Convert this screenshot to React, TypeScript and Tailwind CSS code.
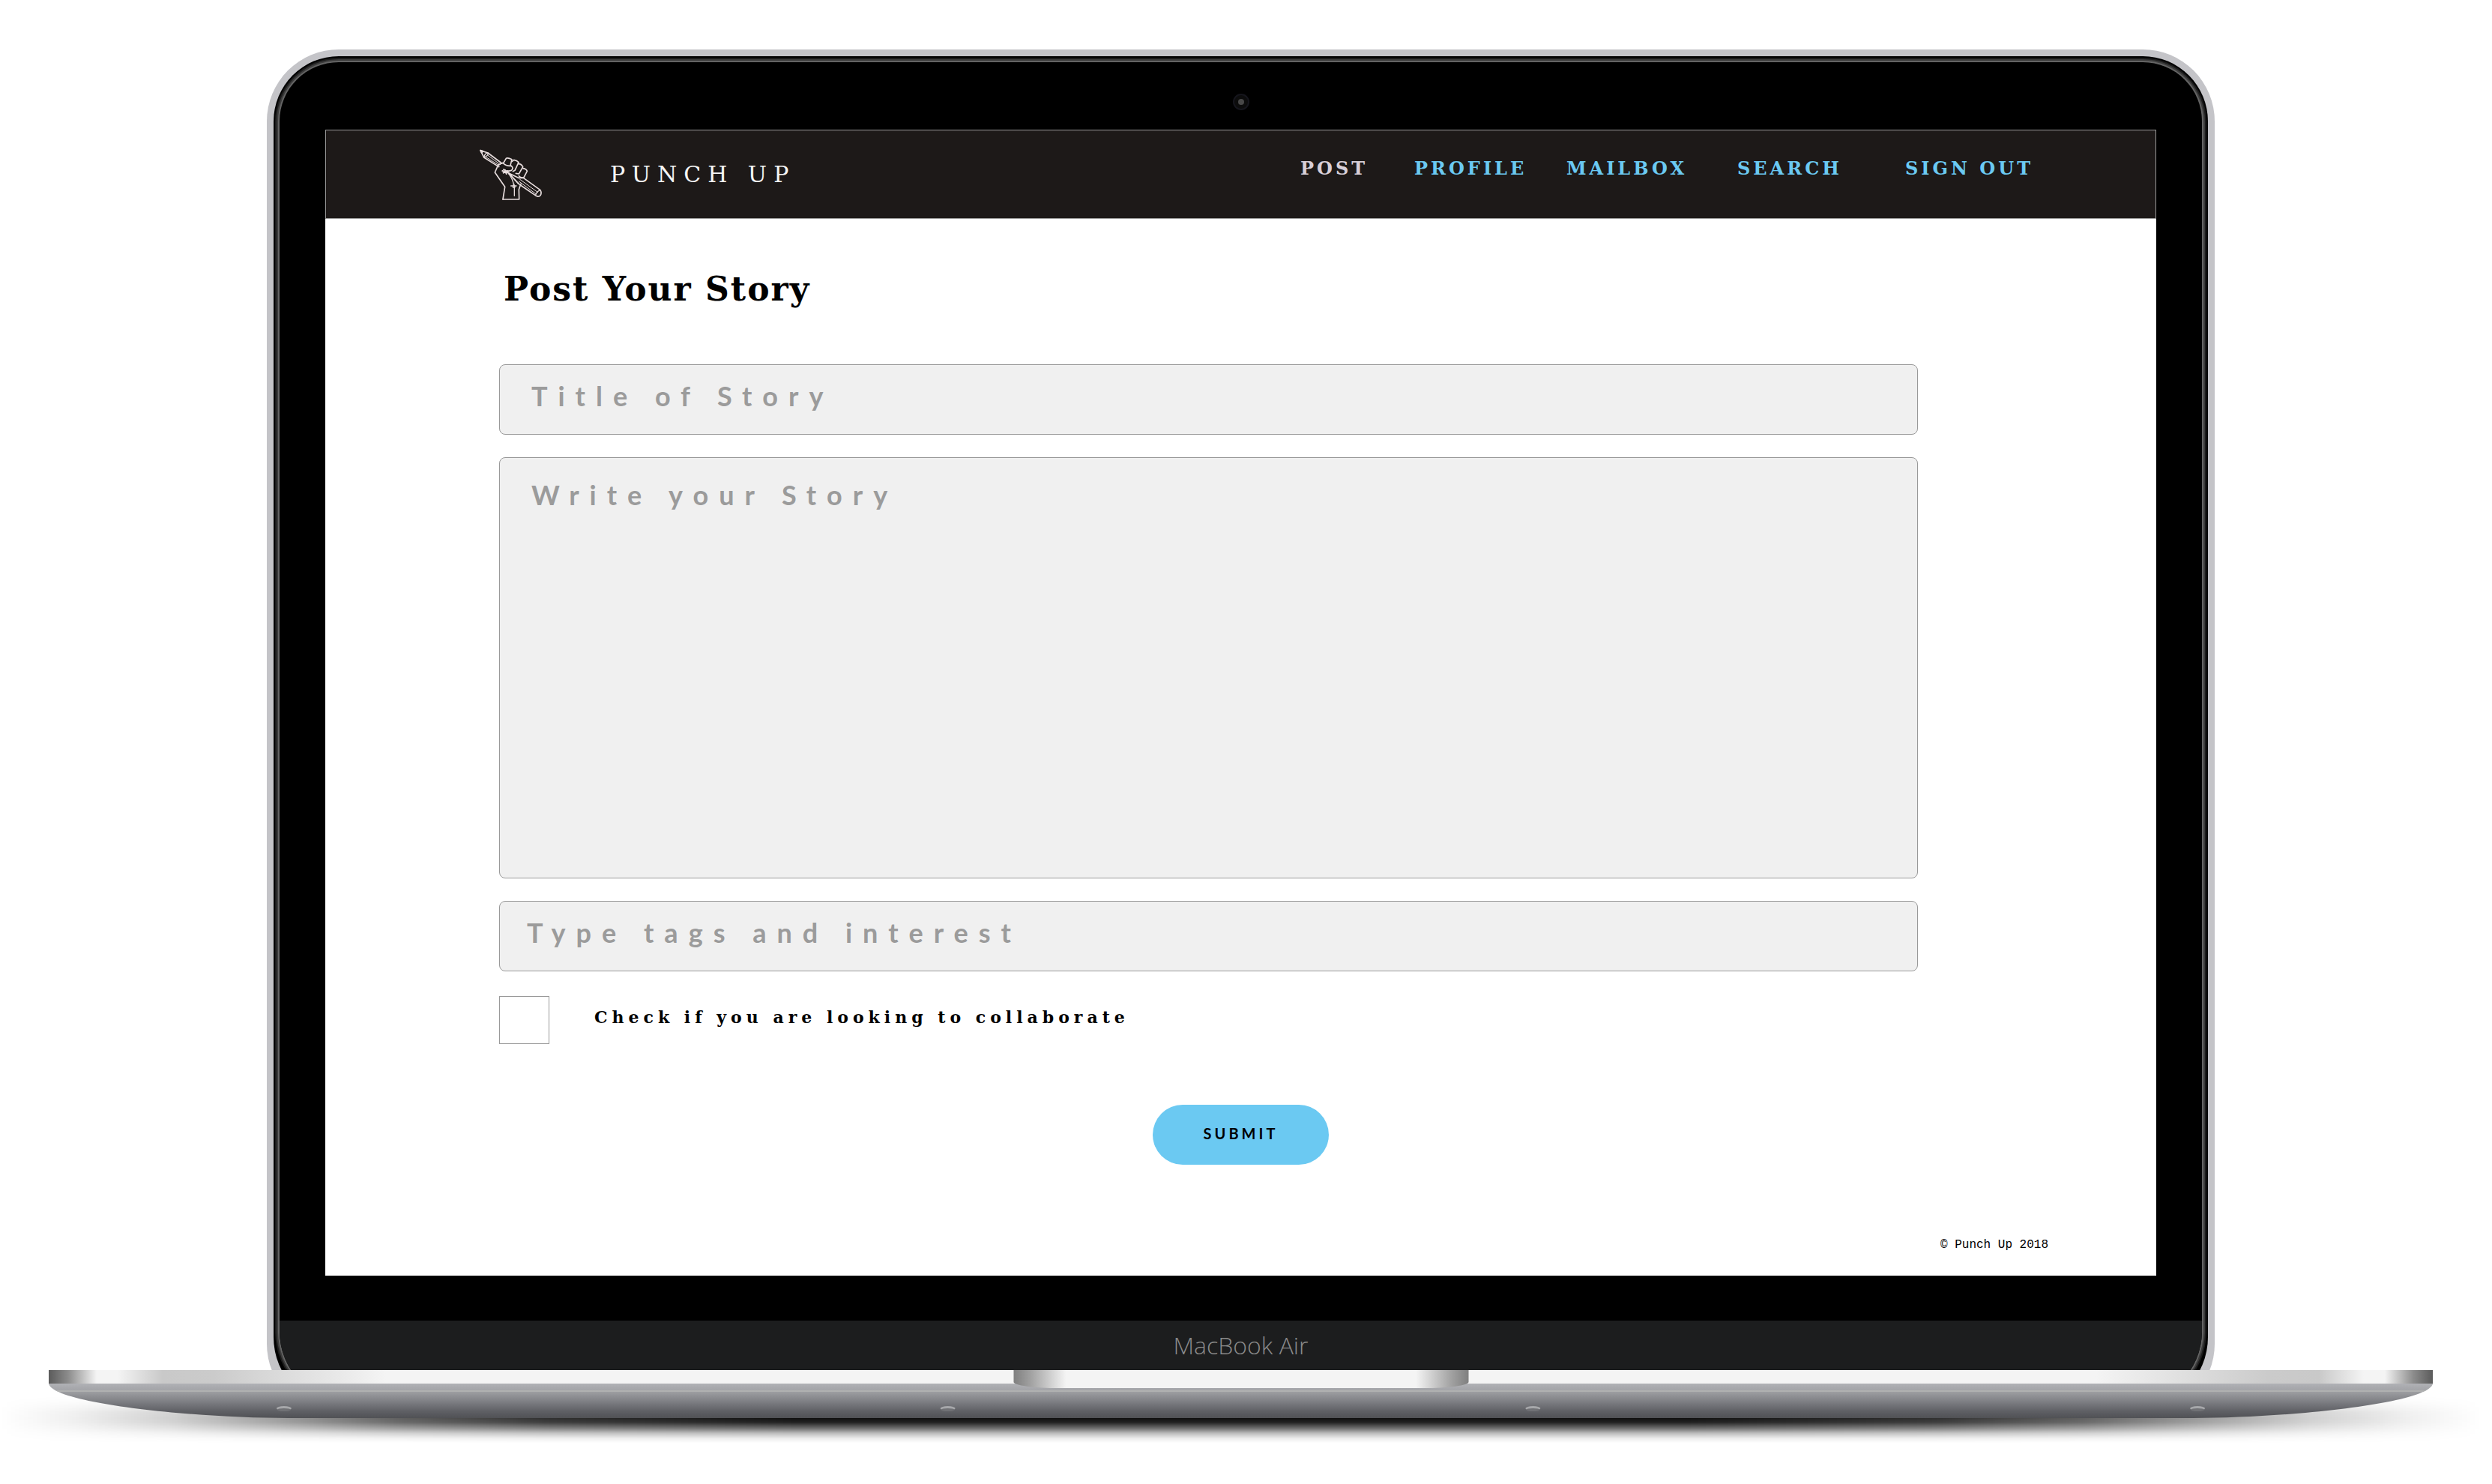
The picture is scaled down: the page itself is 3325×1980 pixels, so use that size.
const SLAB = "font-['DejaVu_Serif',serif]";

const NAV = [
  { label: "POST", current: true },
  { label: "PROFILE", current: false },
  { label: "MAILBOX", current: false },
  { label: "SEARCH", current: false },
  { label: "SIGN OUT", current: false },
];

function FistLogo() {
  return (
    <svg
      viewBox="54 42 258 210"
      className="h-[70px] w-[86px] shrink-0"
      fill="none"
      stroke="#e6dcdc"
      strokeWidth="5"
      strokeLinecap="round"
      strokeLinejoin="round"
      aria-hidden="true"
    >
      {/* pencil, upper part */}
      <path d="M60 50 L90 60 L146 102 M60 50 L74 78 L134 116" />
      <path d="M60 50 L70 53 L65 60 Z" fill="#e6dcdc" />
      <path d="M90 60 Q78 60 74 78 M90 60 Q94 70 74 78" strokeWidth="4" />
      <path d="M90 70 L140 107 M83 77 L136 111" strokeWidth="3" />
      {/* hand */}
      <path d="M150 246 L158 196 L118 138 L132 107 L150 100 Q164 114 184 112 Q194 122 184 130 L168 134 L152 126" />
      <path d="M150 246 L215 246 L214 206 L222 184" />
      {/* fingers */}
      <path d="M153 99 L163 82 Q170 78 186 86 L180 110" />
      <path d="M187 94 L194 88 Q206 90 213 98 L198 130 L190 134" />
      <path d="M213 104 Q224 104 230 116 L214 144 L202 142" />
      <path d="M231 122 Q244 124 247 133 L234 158 Q222 162 214 152" />
      {/* pencil, lower part */}
      <path d="M172 140 L212 160 L232 160 L299 208 Q308 222 298 232 Q290 238 280 230 L216 186 L172 140" />
      <path d="M218 166 L290 218 M214 174 L282 224" strokeWidth="3" />
      <path d="M299 208 Q286 214 280 230" strokeWidth="4" />
      {/* palm creases */}
      <path d="M148 132 L174 140 M152 140 L170 132 M158 128 L164 144" strokeWidth="6" />
      <path d="M172 142 Q190 164 194 190 M182 150 L212 184" strokeWidth="4" />
      <path d="M182 192 L204 192 M194 184 L190 198 L198 198 Z M196 200 L196 232" strokeWidth="4" />
    </svg>
  );
}

function Header() {
  return (
    <header className="flex h-[119px] items-center justify-between border border-[#999] bg-[#1d1918] pr-[163px] pl-[204px]">
      <div className="flex items-center gap-[89px]">
        <FistLogo />
        <span className={`${SLAB} text-[30px] leading-10 tracking-[9px] whitespace-nowrap text-[#f5f5f5]`}>
          PUNCH UP
        </span>
      </div>
      <nav className={`${SLAB} grid grid-cols-[152px_203px_228px_224px_auto] pb-4 text-2xl font-bold tracking-[4px] whitespace-nowrap`}>
        {NAV.map((n) => (
          <a
            key={n.label}
            href="#"
            aria-current={n.current ? "page" : undefined}
            className={n.current ? "text-[#d7cfd8]" : "text-[#6bc9f2]"}
          >
            {n.label}
          </a>
        ))}
      </nav>
    </header>
  );
}

const FIELD =
  "block w-full resize-none rounded-lg border border-[#999] bg-[#f0f0f0] pr-9 font-['Lato',sans-serif] text-4xl leading-[44px] font-bold tracking-[14px] text-[#333] outline-none placeholder:text-[#9b9b9b] placeholder:opacity-100";

function StoryForm() {
  return (
    <form className="flex flex-col" onSubmit={(e) => e.preventDefault()}>
      <div className="flex flex-col pt-[66px] pr-[318px] pl-[232px]">
        <h1 className={`${SLAB} mb-[72px] pl-1.5 text-[44px] leading-[56px] font-bold tracking-[2px] text-black`}>
          Post Your Story
        </h1>
        <div className="flex flex-col gap-[30px]">
          <input type="text" aria-label="Title of Story" placeholder="Title of Story" className={`${FIELD} h-[94px] pb-2.5 pl-[42px]`} />
          <textarea aria-label="Write your Story" placeholder="Write your Story" className={`${FIELD} h-[562px] pt-[27px] pl-[42px]`} />
          <input type="text" aria-label="Type tags and interest" placeholder="Type tags and interest" className={`${FIELD} h-[94px] pb-2.5 pl-9`} />
        </div>
        <div className="mt-[33px] flex items-center gap-[60px]">
          <input
            id="collaborate"
            type="checkbox"
            className="h-16 w-[67px] shrink-0 appearance-none border border-[#999] bg-white checked:bg-[#6bc9f2]"
          />
          <label htmlFor="collaborate" className={`${SLAB} pb-2 text-[22px] leading-8 font-bold tracking-[6px] text-black`}>
            Check if you are looking to collaborate
          </label>
        </div>
      </div>
      <button
        type="submit"
        className="mt-[81px] h-20 w-[235px] self-center rounded-full bg-[#6bc9f2] pb-1 font-['Lato',sans-serif] text-xl font-bold tracking-[4px] text-black"
      >
        SUBMIT
      </button>
    </form>
  );
}

function Lid() {
  return (
    <div className="mx-[356px] rounded-t-[96px] rounded-b-[96px] bg-[#c4c4c8] p-[9px]">
      <div className="rounded-t-[87px] rounded-b-[96px] bg-black p-2">
        <div className="overflow-hidden rounded-t-[79px] rounded-b-[96px] bg-black shadow-[0_0_0_2px_#646464,0_0_0_4px_#3c3c3c,0_0_0_6px_#1c1c1c]">
          <div className="flex h-[90px] items-center justify-center pt-4">
            <span className="grid size-[22px] place-items-center rounded-full border-2 border-[#15151c] bg-[#0c0c0c]">
              <span className="size-2 rounded-full bg-[#484848]" />
            </span>
          </div>
          <div className="mx-[61px] bg-white">
            <Header />
            <StoryForm />
            <footer className="mt-[95px] pr-36 pb-[29px] text-right font-['Liberation_Mono',monospace] text-base leading-6 text-black">
              © Punch Up 2018
            </footer>
          </div>
          <div className="mt-[60px] h-[110px] bg-[#1c1d1e] text-center font-['Open_Sans',sans-serif] text-[32px] leading-[66px] font-light text-[#8a8a8a]">
            MacBook Air
          </div>
        </div>
      </div>
    </div>
  );
}

function Base() {
  return (
    <div className="relative -mt-[61px]">
      <div className="absolute inset-x-0 top-7 h-[72px] bg-[linear-gradient(to_bottom,transparent_6%,#0001_14%,#0004_22%,#0008_30%,#000d_40%,#000e_50%,#000d_58%,#0008_70%,#0004_78%,#0001_88%,transparent_96%)] [mask-image:linear-gradient(to_right,transparent,#0001_3%,#0003_7%,#0006_11%,#000a_16%,#000d_22%,#000_32%,#000_68%,#000d_78%,#000a_84%,#0006_89%,#0003_93%,#0001_97%,transparent)]" />
      <div className="relative mx-[65px]">
        <div className="h-[18px] bg-[linear-gradient(to_right,#5b5b5b,#8c8c8c_26px,#f4f4f4_64px,#f4f4f4_92px,#c9c9c9_152px,#cbcbcb_220px,#f4f4f4_450px,#f4f4f4_calc(100%-450px),#cbcbcb_calc(100%-220px),#c9c9c9_calc(100%-152px),#f4f4f4_calc(100%-92px),#f4f4f4_calc(100%-64px),#8c8c8c_calc(100%-26px),#5b5b5b)]" />
        <svg viewBox="0 0 3182 46" preserveAspectRatio="none" className="block h-[46px] w-full" aria-hidden="true">
          <defs>
            <linearGradient id="underside" x1="0" y1="0" x2="0" y2="1">
              <stop offset="0" stopColor="#b0b1b5" />
              <stop offset="0.2" stopColor="#a3a4a8" />
              <stop offset="0.26" stopColor="#9b9c9f" />
              <stop offset="0.5" stopColor="#808186" />
              <stop offset="0.8" stopColor="#5f6065" />
              <stop offset="1" stopColor="#505155" />
            </linearGradient>
            <clipPath id="hull">
              <path d="M0 0 C4 26 190 46 320 46 H2862 C2992 46 3178 26 3182 0 Z" />
            </clipPath>
          </defs>
          <g clipPath="url(#hull)">
            <rect width="3182" height="46" fill="url(#underside)" />
            <rect y="9" width="3182" height="2" fill="#b0b1b1" />
            {[314, 1200, 1981, 2868].map((x) => (
              <g key={x}>
                <ellipse cx={x} cy="33" rx="10" ry="3" fill="#a6a7aa" />
                <ellipse cx={x} cy="35" rx="9" ry="2" fill="#707175" />
              </g>
            ))}
          </g>
        </svg>
        <div className="absolute top-0 left-1/2 h-6 w-[607px] -translate-x-1/2 rounded-b-[60px_8px] bg-[linear-gradient(to_right,#7f7f7f,#a0a0a0_22px,#f4f4f4_70px,#f4f4f4_calc(100%-70px),#a0a0a0_calc(100%-22px),#7f7f7f)]" />
      </div>
    </div>
  );
}

export default function App() {
  return (
    <main className="min-h-screen overflow-hidden bg-white pt-[66px]">
      <div className="pr-3.5">
        <Lid />
        <Base />
      </div>
    </main>
  );
}
